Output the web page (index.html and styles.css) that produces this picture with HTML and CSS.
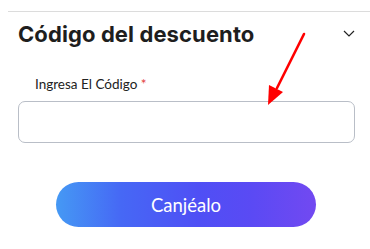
FILE: index.html
```html
<!DOCTYPE html>
<html lang="es">
<head>
<meta charset="utf-8">
<link rel="stylesheet" href="styles.css">
</head>
<body>
<div class="page">
  <div class="divider"></div>
  <div class="head">
    <h2 class="title">Código del descuento</h2>
    <svg class="chev" width="12" height="7" viewBox="0 0 12 7"><path d="M1 1 L6 6 L11 1" fill="none" stroke="#222" stroke-width="1.2"/></svg>
  </div>
  <div class="field">
    <label class="label">Ingresa El Código <span class="req">*</span></label>
    <div class="input"></div>
  </div>
  <div class="actions">
    <button class="btn">Canjéalo</button>
  </div>
  <svg class="arrow" width="370" height="249" viewBox="0 0 370 249">
    <line x1="304" y1="34" x2="277" y2="88" stroke="#ff0000" stroke-width="2.6" stroke-linecap="round"/>
    <polygon points="268,105 269,85 283,92" fill="#ff0000"/>
  </svg>
</div>
</body>
</html>
```

FILE: styles.css
```css
html, body { margin: 0; padding: 0; background: #fff; }
.page { position: relative; width: 370px; height: 249px; overflow: hidden; }
.divider { height: 1px; background: #dcdcdc; margin: 11px 0 0 8px; }
.head { display: flex; align-items: center; justify-content: space-between; padding: 0 15px 0 18px; margin-top: 9px; }
.title { margin: 0; font-family: "Inter", "Noto Sans", sans-serif; font-weight: 700; font-size: 22px; line-height: 26px; color: #1e1e1e; letter-spacing: 0.1px; }
.chev { display: block; margin-top: -2px; }
.field { padding: 0 15px 0 18px; margin-top: 29px; }
.label { display: block; padding-left: 17px; font-family: "Lato", "Noto Sans", sans-serif; font-size: 13.5px; line-height: 16px; color: #222; }
.req { color: #e23b3b; }
.input { margin-top: 9px; height: 40px; border: 1px solid #b9bec7; border-radius: 7px; }
.actions { padding-left: 56px; margin-top: 39px; }
.btn { display: block; width: 260px; height: 45px; border: none; border-radius: 23px; background: linear-gradient(90deg, #4599f4 0%, #4668f5 25%, #4f4ff5 55%, #5a4af4 75%, #7249f1 100%); color: #fff; font-family: "Lato", "Noto Sans", sans-serif; font-size: 18.5px; padding: 0; }
.arrow { position: absolute; left: 0; top: 0; pointer-events: none; }
```
